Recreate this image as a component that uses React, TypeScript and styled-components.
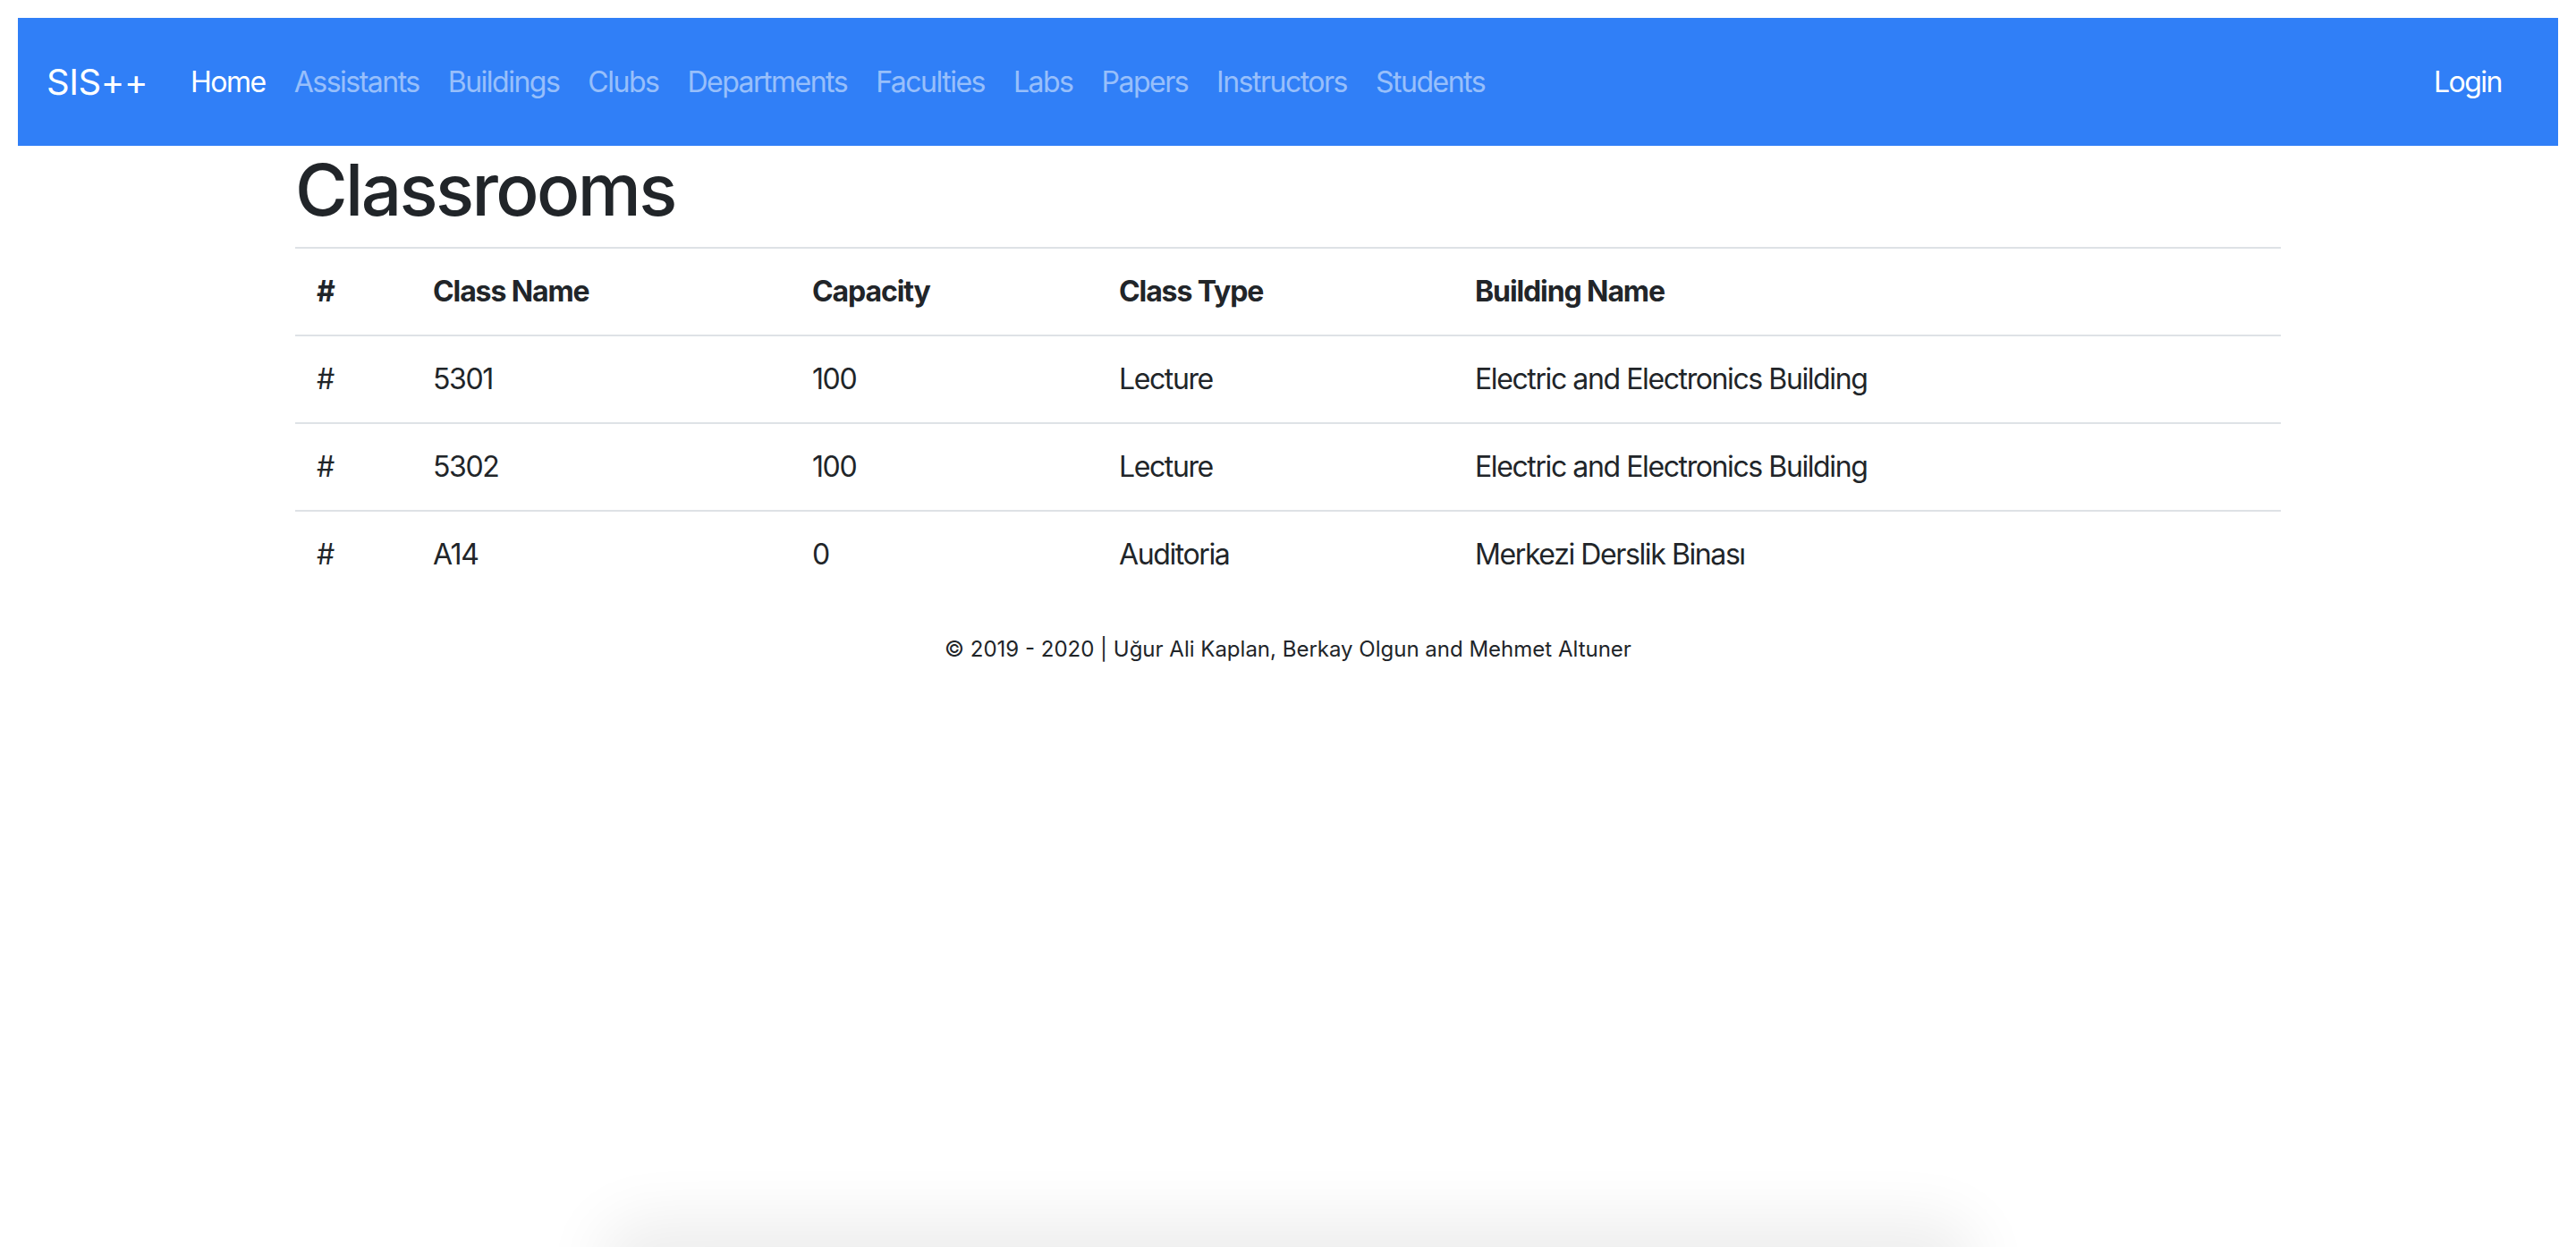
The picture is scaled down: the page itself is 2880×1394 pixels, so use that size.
import React from 'react';
import styled, { createGlobalStyle } from 'styled-components';

const GlobalStyle = createGlobalStyle`
  html, body {
    margin: 0;
    padding: 0;
    background: #fff;
  }
  body {
    font-family: Inter, "Noto Sans", "Liberation Sans", sans-serif;
    color: #212529;
    overflow: hidden;
  }
  * {
    box-sizing: border-box;
  }
`;

const Page = styled.div`
  min-height: 1394px;
  padding: 20px 20px 0;
`;

const Navbar = styled.nav`
  display: flex;
  align-items: center;
  height: 143px;
  padding: 0 47px 0 32px;
  background: #307ff7;
`;

const Brand = styled.a`
  font-size: 40px;
  line-height: 60px;
  color: #fff;
  margin-right: 32px;
  letter-spacing: -0.4px;
  text-decoration: none;
`;

const NavList = styled.div`
  display: flex;
  align-items: center;
  flex: 1;
`;

const NavLink = styled.a<{ $active?: boolean; $right?: boolean }>`
  font-size: 32px;
  line-height: 48px;
  padding: 0 16px;
  letter-spacing: -1.5px;
  text-decoration: none;
  color: ${p => (p.$active ? '#fff' : 'rgba(255, 255, 255, 0.5)')};
  margin-left: ${p => (p.$right ? 'auto' : '0')};
`;

const Container = styled.main`
  width: 2220px;
  margin: 0 auto;
`;

const Title = styled.h1`
  font-size: 80px;
  font-weight: 500;
  line-height: 96px;
  margin: 1px 0 16px;
  letter-spacing: -2.6px;
`;

const Table = styled.table`
  width: 100%;
  border-collapse: collapse;
  font-size: 32px;
  line-height: 48px;
  letter-spacing: -1.4px;
  margin-bottom: 40px;
`;

const HeadCell = styled.th<{ $width?: number }>`
  text-align: left;
  font-weight: 700;
  padding: 24px;
  border-top: 2px solid #dee2e6;
  vertical-align: top;
  letter-spacing: -1.1px;
  width: ${p => (p.$width ? `${p.$width}px` : 'auto')};
`;

const Cell = styled.td`
  padding: 24px;
  border-top: 2px solid #dee2e6;
  vertical-align: top;
`;

const Footer = styled.footer`
  text-align: center;
  font-size: 24px;
  line-height: 36px;
  letter-spacing: 0;
`;

const Shade = styled.div`
  position: fixed;
  left: 50%;
  bottom: -40px;
  width: 1480px;
  height: 40px;
  transform: translateX(-50%);
  border-radius: 40px;
  box-shadow: 0 0 70px 30px rgba(0, 0, 0, 0.075);
  pointer-events: none;
`;

const links = [
  'Assistants',
  'Buildings',
  'Clubs',
  'Departments',
  'Faculties',
  'Labs',
  'Papers',
  'Instructors',
  'Students',
];

const columns = [
  { label: '#', width: 130 },
  { label: 'Class Name', width: 424 },
  { label: 'Capacity', width: 343 },
  { label: 'Class Type', width: 398 },
  { label: 'Building Name' },
];

const classrooms = [
  { name: '5301', capacity: 100, type: 'Lecture', building: 'Electric and Electronics Building' },
  { name: '5302', capacity: 100, type: 'Lecture', building: 'Electric and Electronics Building' },
  { name: 'A14', capacity: 0, type: 'Auditoria', building: 'Merkezi Derslik Binası' },
];

export default function App() {
  return (
    <>
      <GlobalStyle />
      <Page>
        <Navbar>
          <Brand href="#">SIS++</Brand>
          <NavList>
            <NavLink href="#" $active>
              Home
            </NavLink>
            {links.map(link => (
              <NavLink key={link} href="#">
                {link}
              </NavLink>
            ))}
            <NavLink href="#" $active $right>
              Login
            </NavLink>
          </NavList>
        </Navbar>
        <Container>
          <Title>Classrooms</Title>
          <Table>
            <thead>
              <tr>
                {columns.map(col => (
                  <HeadCell key={col.label} $width={col.width}>
                    {col.label}
                  </HeadCell>
                ))}
              </tr>
            </thead>
            <tbody>
              {classrooms.map(room => (
                <tr key={room.name}>
                  <Cell>#</Cell>
                  <Cell>{room.name}</Cell>
                  <Cell>{room.capacity}</Cell>
                  <Cell>{room.type}</Cell>
                  <Cell>{room.building}</Cell>
                </tr>
              ))}
            </tbody>
          </Table>
          <Footer>© 2019 - 2020 | Uğur Ali Kaplan, Berkay Olgun and Mehmet Altuner</Footer>
        </Container>
        <Shade />
      </Page>
    </>
  );
}
